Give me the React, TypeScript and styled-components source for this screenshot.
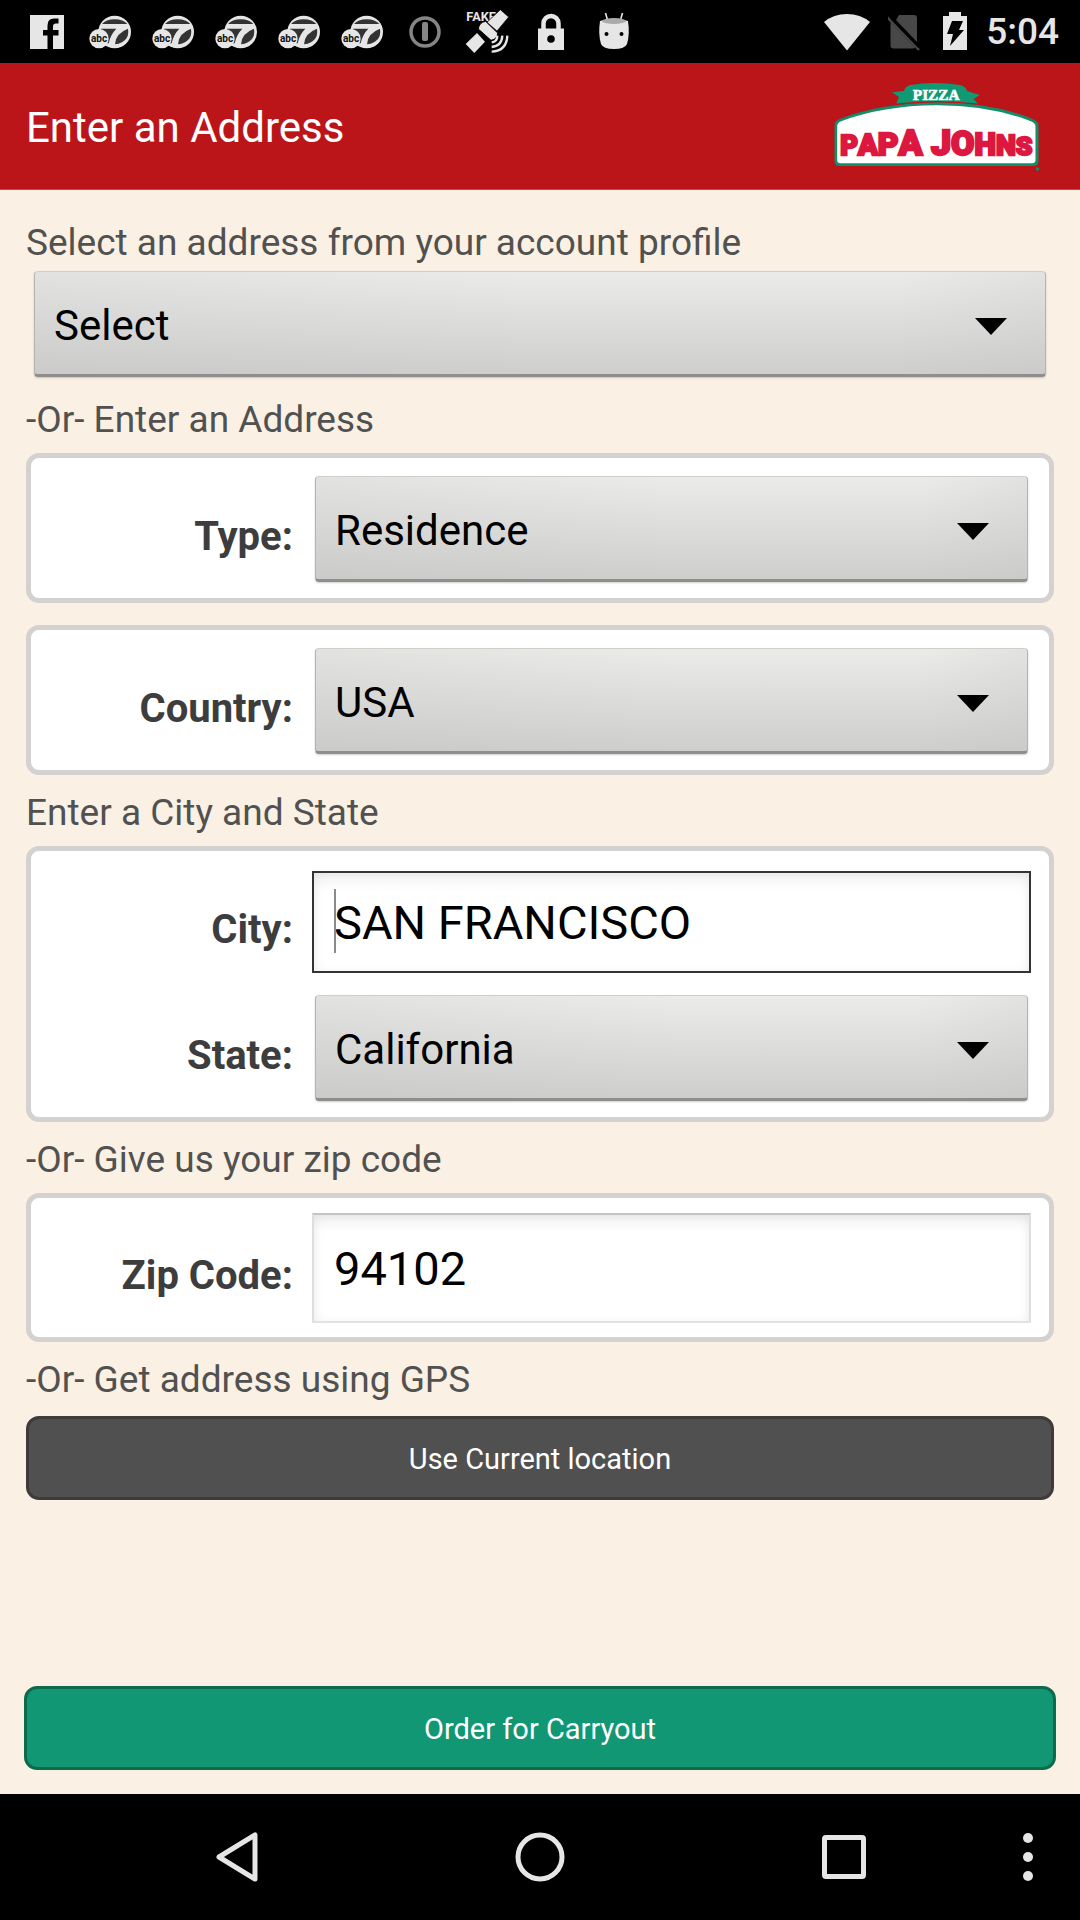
import React from "react";
import styled, { createGlobalStyle } from "styled-components";

const GlobalStyle = createGlobalStyle`
  *, *::before, *::after { box-sizing: border-box; }
  body { margin: 0; background: #faf0e3; }
  body, button, input, select { font-family: Roboto, "Liberation Sans", sans-serif; }
`;

const Page = styled.div`
  display: flex;
  flex-direction: column;
  min-height: 100vh;
  background: #faf0e3;
`;

const StatusBar = styled.div`
  display: flex;
  justify-content: space-between;
  align-items: center;
  height: 63px;
  padding: 0 21px 0 15px;
  background: #000;
`;

const Notifications = styled.div`
  display: flex;
`;

const Slot = styled.span`
  display: flex;
  justify-content: center;
  align-items: center;
  width: 63px;
`;

const SystemIcons = styled.div`
  display: flex;
  align-items: center;
  gap: 17px;
`;

const Clock = styled.span`
  color: #e6e6e6;
  font-size: 37px;
  font-weight: 500;
  line-height: 44px;
`;

const Header = styled.header`
  display: flex;
  justify-content: space-between;
  align-items: center;
  height: 127px;
  padding: 0 37px 0 26px;
  border-bottom: 1px solid #c9474a;
  background: #bb151a;
`;

const Title = styled.h1`
  margin: 0;
  padding-top: 4px;
  color: #fff;
  font-size: 42px;
  font-weight: 400;
  line-height: 48px;
`;

const Form = styled.form`
  display: flex;
  flex: 1;
  flex-direction: column;
  gap: 16px;
  padding: 31px 26px 24px;
`;

const Section = styled.section<{ $gap?: number }>`
  display: flex;
  flex-direction: column;
  gap: ${(p) => p.$gap ?? 11}px;
`;

const ProfileSection = styled(Section)`
  padding-bottom: 5px;
`;

const Prompt = styled.label`
  color: #515151;
  font-size: 37px;
  line-height: 44px;
`;

const Cards = styled.div`
  display: flex;
  flex-direction: column;
  gap: 22px;
`;

const Card = styled.div<{ $top?: number; $bottom?: number }>`
  display: flex;
  flex-direction: column;
  gap: 22px;
  padding: ${(p) => p.$top ?? 18}px 18px ${(p) => p.$bottom ?? 16}px 0;
  border: 5px solid #d3d2d0;
  border-radius: 13px;
  background: #fff;
`;

const Row = styled.div`
  display: grid;
  grid-template-columns: 262px 1fr;
  column-gap: 19px;
  align-items: center;
`;

const RowLabel = styled.label`
  padding-top: 15px;
  color: #3d3d3d;
  font-size: 40px;
  font-weight: 700;
  line-height: 46px;
  text-align: right;
`;

const SpinnerFrame = styled.div<{ $inset: number }>`
  position: relative;
  margin: 0 ${(p) => p.$inset}px;
`;

const SpinnerSelect = styled.select`
  display: block;
  width: 100%;
  height: 106px;
  padding: 4px 100px 0 19px;
  border: 1px solid;
  border-color: #d0cfcc #b4b3b0 #8f8e8b #b4b3b0;
  border-bottom-width: 3px;
  border-radius: 4px;
  appearance: none;
  background:
    linear-gradient(90deg, rgba(190, 190, 190, 0.2), rgba(190, 190, 190, 0) 50%, rgba(190, 190, 190, 0) 85%, rgba(190, 190, 190, 0.2)),
    linear-gradient(#ebebea, #cececd);
  box-shadow: 0 1px 2px rgba(0, 0, 0, 0.2);
  color: #000;
  font-size: 42px;
`;

const SpinnerArrow = styled.svg`
  position: absolute;
  top: 47px;
  right: 39px;
  pointer-events: none;
`;

const FieldFrame = styled.div`
  position: relative;
`;

const TextField = styled.input<{ $active?: boolean }>`
  display: block;
  width: 100%;
  height: ${(p) => (p.$active ? 102 : 110)}px;
  padding: 0 20px;
  border: 2px solid;
  border-color: ${(p) => (p.$active ? "#333" : "#c4c4c4 #dedede #e2e2e2")};
  border-radius: 0;
  outline: none;
  background: #fff;
  box-shadow: inset 0 8px 16px -4px rgba(0, 0, 0, 0.1), inset 0 0 10px rgba(0, 0, 0, 0.04);
  color: #000;
  font-size: 47px;
`;

const Caret = styled.span`
  position: absolute;
  top: 18px;
  left: 22px;
  width: 2px;
  height: 64px;
  background: #8a8a8a;
`;

const ActionButton = styled.button<{ $primary?: boolean }>`
  height: 84px;
  padding: 2px 0 0;
  border: 3px solid ${(p) => (p.$primary ? "#0d6b4c" : "#3f3b3a")};
  border-radius: 13px;
  background: ${(p) => (p.$primary ? "#119774" : "#505050")};
  color: #fff;
  font-size: 29px;
  line-height: 36px;
`;

const Footer = styled.div`
  display: flex;
  flex-direction: column;
  margin: auto -2px 0;
`;

const NavBar = styled.nav`
  display: grid;
  grid-template-columns: 85px repeat(3, 1fr) 84px;
  height: 126px;
  background: #000;
`;

const NavButton = styled.button<{ $column: number }>`
  grid-column: ${(p) => p.$column};
  display: flex;
  justify-content: center;
  align-items: center;
  padding: 0;
  border: 0;
  background: none;
`;

const OverflowButton = styled(NavButton)`
  padding-right: 20px;
`;

const LIGHT = "#e6e6e6";

const FacebookIcon = () => (
  <svg width="36" height="36" viewBox="0 0 36 36">
    <path d="M1 1h34v34H24V21.500h5.500v-5.500H24v-3.500q0-3 3-3h2.500V4.500h-4.500q-6.500 0-6.500 7V16h-4.500v5.500h4.500V35H1z" fill={LIGHT} />
  </svg>
);

const Abc7Icon = () => (
  <svg width="42" height="34" viewBox="267 43 126 102">
    <circle cx="344" cy="94" r="49" fill={LIGHT} />
    <path d="M306 70Q318 56 344 56Q370 56 382 70Z" fill="#333" />
    <path d="M303 84H349Q331 102 326 128H318Q303 106 303 84Z" fill="#333" />
    <path d="M384 84Q390 124 345 131Q346 98 384 84Z" fill="#333" />
    <circle cx="297" cy="114" r="29" fill={LIGHT} />
    <text x="297" y="124" textAnchor="middle" fontFamily="Roboto, sans-serif" fontWeight="700" fontSize="30" fill="#111">abc</text>
  </svg>
);

const InfoIcon = () => (
  <svg width="34" height="34" viewBox="0 0 34 34">
    <circle cx="17" cy="17" r="14" fill="none" stroke="#858585" strokeWidth="3.500" />
    <rect x="14" y="7" width="6" height="19" rx="2" fill="#858585" />
  </svg>
);

const SatelliteIcon = () => (
  <svg width="46" height="46" viewBox="0 0 138 138">
    <text x="4" y="35" fontFamily="Roboto, sans-serif" fontWeight="700" fontSize="38" fill={LIGHT}>FAKE</text>
    <path d="M106 2L131 24L96 66L66 40Z" fill={LIGHT} stroke="#000" strokeWidth="2" />
    <path d="M2 105L36 72L60 98L28 132Z" fill={LIGHT} />
    <path d="M40 60Q42 40 62 37L98 72Q98 90 78 94Z" fill={LIGHT} stroke="#000" strokeWidth="3" strokeLinejoin="round" />
    <path d="M97 80q0 18-17 20M112 80q-2 32-32 34M127 80q-2 46-47 48" fill="none" stroke={LIGHT} strokeWidth="7" />
  </svg>
);

const LockIcon = () => (
  <svg width="28" height="38" viewBox="0 0 28 38">
    <path d="M6.500 18V10.500a7.500 7.500 0 0 1 15 0V18" fill="none" stroke={LIGHT} strokeWidth="4.500" />
    <path d="M1 15.500h26V37H1z" fill={LIGHT} />
    <circle cx="14" cy="26" r="3.800" fill="#000" />
  </svg>
);

const AndroidIcon = () => (
  <svg width="32" height="42" viewBox="0 0 32 42">
    <path d="M7.500 2l2 7M24.500 2l-2 7" stroke={LIGHT} strokeWidth="1.600" />
    <path d="M2 10q14-5 28 0q2 13-1 23q-2 5-13 5T3 33q-3-10-1-23z" fill={LIGHT} />
    <ellipse cx="16" cy="10" rx="12" ry="3" fill="#aaa" />
    <circle cx="8.500" cy="23" r="2" fill="#000" />
    <circle cx="23.500" cy="23" r="2" fill="#000" />
  </svg>
);

const WifiIcon = () => (
  <svg width="48" height="38" viewBox="0 0 48 38">
    <path d="M24 37.500L1 9Q10.500 1 24 1t23 8z" fill={LIGHT} />
  </svg>
);

const NoSimIcon = () => (
  <svg width="38" height="38" viewBox="2 0 38 38">
    <path d="M13 2h15a3 3 0 0 1 3 3v24L10 7zM4.500 9L29 34.500q-1 1-2 1H7.500a3 3 0 0 1-3-3z" fill="#484848" />
    <path d="M1 4l32 33" stroke="#484848" strokeWidth="2.500" />
    <path d="M5 5l28 29" stroke="#000" strokeWidth="2.500" />
  </svg>
);

const BatteryIcon = () => (
  <svg width="26" height="40" viewBox="8 2 26 40">
    <path d="M14 2h12v4h6v34H8V6h6z" fill={LIGHT} />
    <path d="M17 11h11l-4 9h5L15 36l3-12h-6z" fill="#000" />
  </svg>
);

type Letter = [glyph: string, size: number];

const papa: Letter[] = [["P", 82], ["A", 88], ["P", 96], ["A", 106]];
const johns: Letter[] = [["J", 108], ["O", 102], ["H", 92], ["N", 85], ["S", 80]];

const LogoWord = ({ x, letters }: { x: number; letters: Letter[] }) => (
  <text
    x={x}
    y="462"
    textAnchor="middle"
    fontFamily="Roboto, sans-serif"
    fontWeight="900"
    fill="#dc1840"
    stroke="#dc1840"
    strokeWidth="7"
  >
    {letters.map(([glyph, size], i) => (
      <tspan key={i} fontSize={size}>{glyph}</tspan>
    ))}
  </text>
);

const BrandLogo = () => (
  <svg width="213" height="93" viewBox="150 235 640 280" role="img" aria-label="Papa Johns Pizza">
    <path d="M336 272l36-4q4-14 20-18q74-12 148 0q18 4 22 18l38 12-18 12 12 14q-62-8-125-8t-120 8l8-20z" fill="#0f9a74" />
    <path d="M163 372q0-14 14-19Q300 305 468 303t292 50q17 6 17 19v106q0 16-16 16H179q-16 0-16-16z" fill="#0f8f6c" />
    <path d="M171 375q0-12 12-16Q310 312 468 311t286 48q14 5 14 16v101q0 10-10 10H181q-10 0-10-10z" fill="#fff" />
    <text x="469" y="294" textAnchor="middle" fontFamily="'Liberation Serif', serif" fontWeight="700" fontSize="46" fill="#fff" stroke="#fff" strokeWidth="2">PIZZA</text>
    <LogoWord x={304} letters={papa} />
    <LogoWord x={606} letters={johns} />
    <circle cx="774" cy="503" r="5" fill="#0f8f6c" />
  </svg>
);

type SpinnerProps = { id: string; value: string; inset?: number };

const Spinner = ({ id, value, inset = 3 }: SpinnerProps) => (
  <SpinnerFrame $inset={inset}>
    <SpinnerSelect id={id} defaultValue={value}>
      <option>{value}</option>
    </SpinnerSelect>
    <SpinnerArrow width="32" height="18" viewBox="0 0 32 18" aria-hidden="true">
      <path d="M0 0h32L16 17z" fill="#000" />
    </SpinnerArrow>
  </SpinnerFrame>
);

export default function App() {
  return (
    <Page>
      <GlobalStyle />
      <StatusBar>
        <Notifications>
          <Slot><FacebookIcon /></Slot>
          {[0, 1, 2, 3, 4].map((n) => (
            <Slot key={n}><Abc7Icon /></Slot>
          ))}
          <Slot><InfoIcon /></Slot>
          <Slot><SatelliteIcon /></Slot>
          <Slot><LockIcon /></Slot>
          <Slot><AndroidIcon /></Slot>
        </Notifications>
        <SystemIcons>
          <WifiIcon />
          <NoSimIcon />
          <BatteryIcon />
          <Clock>5:04</Clock>
        </SystemIcons>
      </StatusBar>

      <Header>
        <Title>Enter an Address</Title>
        <BrandLogo />
      </Header>

      <Form onSubmit={(e) => e.preventDefault()}>
        <ProfileSection $gap={6}>
          <Prompt htmlFor="profile">Select an address from your account profile</Prompt>
          <Spinner id="profile" value="Select" inset={8} />
        </ProfileSection>

        <Section>
          <Prompt as="div">-Or- Enter an Address</Prompt>
          <Cards>
            <Card>
              <Row>
                <RowLabel htmlFor="type">Type:</RowLabel>
                <Spinner id="type" value="Residence" />
              </Row>
            </Card>
            <Card>
              <Row>
                <RowLabel htmlFor="country">Country:</RowLabel>
                <Spinner id="country" value="USA" />
              </Row>
            </Card>
          </Cards>
        </Section>

        <Section>
          <Prompt as="div">Enter a City and State</Prompt>
          <Card $top={20}>
            <Row>
              <RowLabel htmlFor="city">City:</RowLabel>
              <FieldFrame>
                <TextField id="city" type="text" defaultValue="SAN FRANCISCO" $active />
                <Caret />
              </FieldFrame>
            </Row>
            <Row>
              <RowLabel htmlFor="state">State:</RowLabel>
              <Spinner id="state" value="California" />
            </Row>
          </Card>
        </Section>

        <Section>
          <Prompt as="div">-Or- Give us your zip code</Prompt>
          <Card $top={15} $bottom={14}>
            <Row>
              <RowLabel htmlFor="zip">Zip Code:</RowLabel>
              <TextField id="zip" type="text" defaultValue="94102" />
            </Row>
          </Card>
        </Section>

        <Section $gap={14}>
          <Prompt as="div">-Or- Get address using GPS</Prompt>
          <ActionButton type="button">Use Current location</ActionButton>
        </Section>

        <Footer>
          <ActionButton type="submit" $primary>Order for Carryout</ActionButton>
        </Footer>
      </Form>

      <NavBar>
        <NavButton $column={2} aria-label="Back">
          <svg width="44" height="52" viewBox="0 0 44 52">
            <path d="M40 4v44L4 26z" fill="none" stroke={LIGHT} strokeWidth="5" strokeLinejoin="round" />
          </svg>
        </NavButton>
        <NavButton $column={3} aria-label="Home">
          <svg width="52" height="52" viewBox="0 0 52 52">
            <circle cx="26" cy="26" r="22" fill="none" stroke={LIGHT} strokeWidth="5" />
          </svg>
        </NavButton>
        <NavButton $column={4} aria-label="Recent apps">
          <svg width="46" height="46" viewBox="0 0 46 46">
            <rect x="3.500" y="3.500" width="39" height="39" rx="1.500" fill="none" stroke={LIGHT} strokeWidth="5" />
          </svg>
        </NavButton>
        <OverflowButton $column={5} aria-label="More options">
          <svg width="12" height="50" viewBox="0 0 12 50">
            <circle cx="6" cy="6" r="5" fill={LIGHT} />
            <circle cx="6" cy="25" r="5" fill={LIGHT} />
            <circle cx="6" cy="44" r="5" fill={LIGHT} />
          </svg>
        </OverflowButton>
      </NavBar>
    </Page>
  );
}
